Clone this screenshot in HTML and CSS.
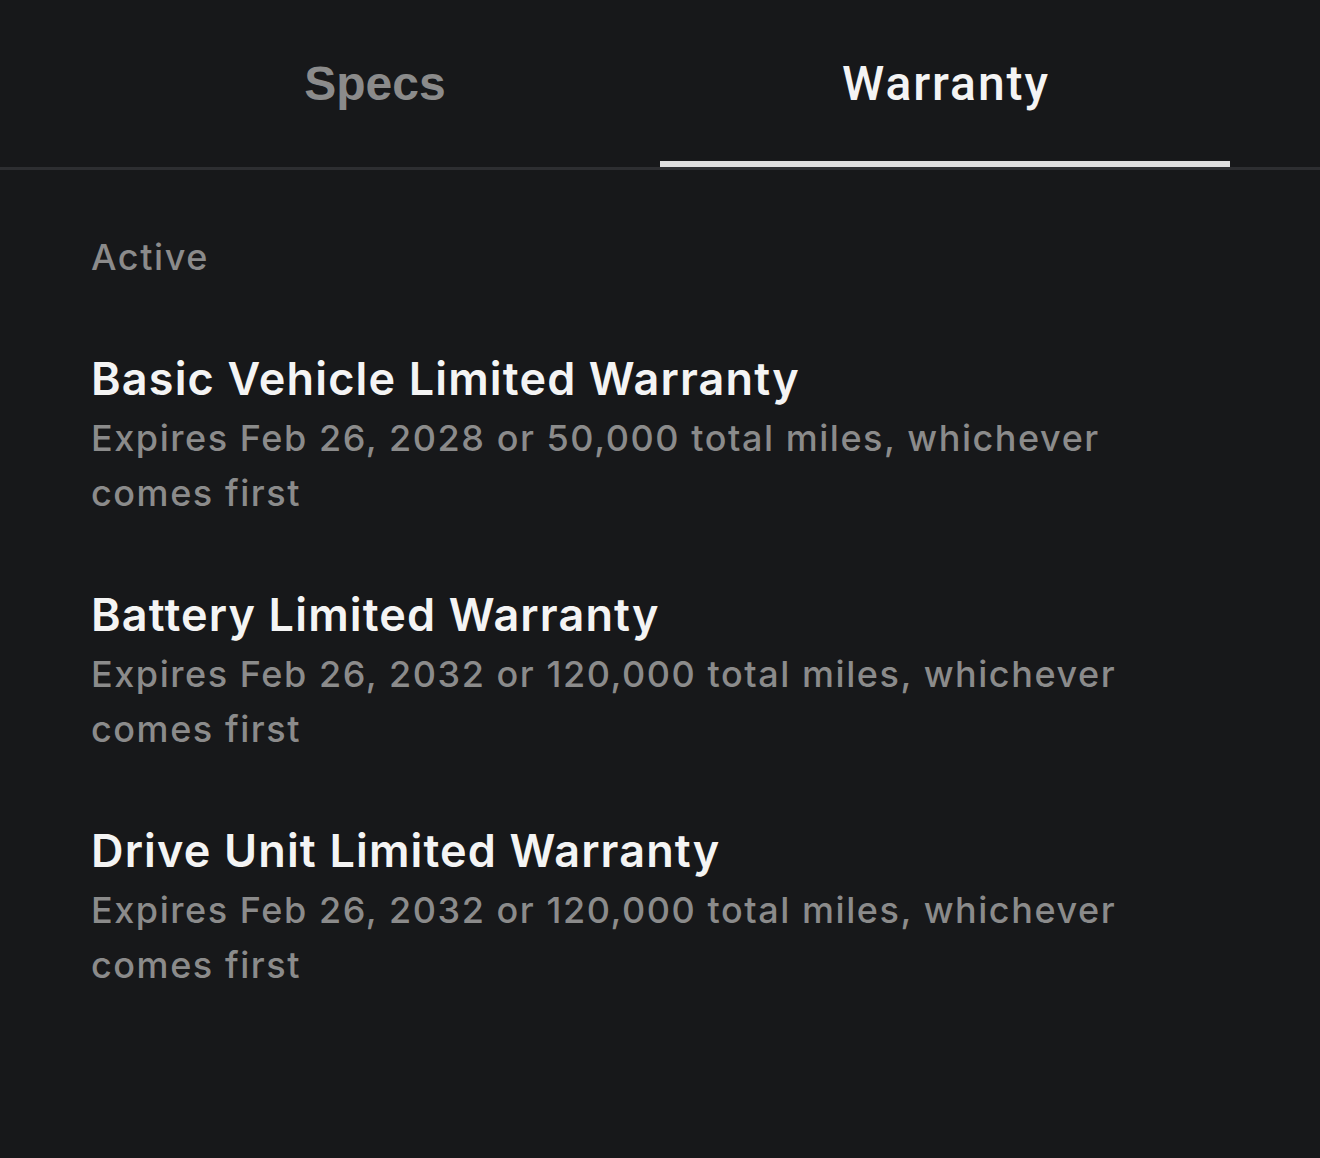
FILE: index.html
```html
<!DOCTYPE html>
<html lang="en">
<head>
<meta charset="utf-8">
<title>Warranty</title>
<link rel="stylesheet" href="styles.css">
</head>
<body>
<header class="tabs">
  <div class="tab tab-specs">Specs</div>
  <div class="tab tab-active">Warranty</div>
</header>
<main class="content">
  <div class="section-label">Active</div>
  <ul class="warranty-list">
    <li class="warranty">
      <div class="warranty-title">Basic Vehicle Limited Warranty</div>
      <div class="warranty-desc">Expires Feb 26, 2028 or 50,000 total miles, whichever comes first</div>
    </li>
    <li class="warranty">
      <div class="warranty-title">Battery Limited Warranty</div>
      <div class="warranty-desc">Expires Feb 26, 2032 or 120,000 total miles, whichever comes first</div>
    </li>
    <li class="warranty">
      <div class="warranty-title">Drive Unit Limited Warranty</div>
      <div class="warranty-desc">Expires Feb 26, 2032 or 120,000 total miles, whichever comes first</div>
    </li>
  </ul>
</main>
</body>
</html>
```

FILE: styles.css
```css
html, body {
  margin: 0;
  padding: 0;
  background: #17181a;
}
body {
  min-height: 1158px;
  font-family: Inter, "Noto Sans", sans-serif;
  color: #f4f4f4;
}
.tabs {
  display: flex;
  padding: 0 90px;
  border-bottom: 3px solid #2d2e31;
}
.tab {
  flex: 1;
  text-align: center;
  font-size: 48px;
  line-height: 56px;
  padding-top: 56px;
  padding-bottom: 49px;
  border-bottom: 6px solid transparent;
}
.tab-specs {
  font-family: "Liberation Sans", Arial, sans-serif;
  font-weight: 700;
  color: #8b8b8b;
}
.tab-active {
  font-family: Roboto, "Liberation Sans", sans-serif;
  font-weight: 500;
  letter-spacing: 1.9px;
  text-indent: 1.9px;
  color: #f4f4f4;
  border-bottom-color: #dedede;
}
.content {
  padding: 60px 91px 0;
  max-width: 1080px;
}
.section-label {
  font-size: 36px;
  line-height: 55px;
  font-weight: 500;
  letter-spacing: 1.6px;
  color: #8b8b8b;
}
.warranty-list {
  list-style: none;
  margin: 64px 0 0;
  padding: 0;
  display: flex;
  flex-direction: column;
  gap: 64px;
}
.warranty-title {
  font-size: 45px;
  line-height: 60px;
  font-weight: 600;
  letter-spacing: 1.15px;
  color: #f4f4f4;
}
.warranty-desc {
  margin-top: 2px;
  font-size: 36px;
  line-height: 55px;
  font-weight: 500;
  letter-spacing: 1.55px;
  color: #8b8b8b;
}
```
